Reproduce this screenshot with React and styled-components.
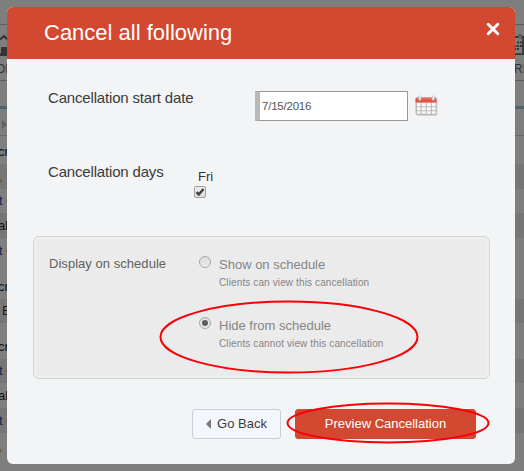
import React from "react";
import styled, { createGlobalStyle } from "styled-components";

const GlobalStyle = createGlobalStyle`
  * { box-sizing: border-box; }
  body { margin: 0; overflow: hidden; background: #7e7e7e; font-family: "Liberation Sans", Arial, sans-serif; }
`;

const Screen = styled.div`
  position: relative;
  width: 524px;
  height: 471px;
  overflow: hidden;
`;

/* Dimmed page under the dialog */
const Page = styled.div`
  display: flex;
  flex-direction: column;
  height: 100%;
  background: #7e7e7e;
`;

const TopStrip = styled.div`
  flex: none;
  height: 24px;
`;

const NavBar = styled.div`
  flex: none;
  display: flex;
  justify-content: space-between;
  height: 57px;
  padding-top: 9px;
  border-top: 1px solid #5c5c5c;
  border-bottom: 1px solid #5c5c5c;
`;

const NavItem = styled.div`
  width: 9px;
  overflow: hidden;
  font-size: 12px;
  line-height: 14px;
  color: #333;
  svg { display: block; margin-bottom: 5px; }
  span { display: block; margin-left: ${(p) => p.$shift || 0}px; }
`;

const SubBar = styled.div`
  flex: none;
  height: 28px;
  border-bottom: 3px solid #4a6670;
`;

const GridHead = styled.div`
  flex: none;
  display: flex;
  align-items: center;
  height: 27px;
  padding: 5px 0 0 2px;
  border-bottom: 1px solid #686868;
`;

const PageRow = styled.div`
  flex: none;
  display: flex;
  align-items: flex-end;
  height: ${(p) => p.$h}px;
  padding-bottom: 6px;
  line-height: 13px;
  font-size: 13px;
  white-space: nowrap;
  color: ${(p) => p.$color || "#101010"};
  background: ${(p) => (p.$dark ? "#767676" : "#7f7f7f")};
  span { margin-left: ${(p) => p.$shift || 0}px; }
`;

const Mark = styled.i`
  width: 3px;
  height: 4px;
  margin: 0 0 4px 3px;
  border-radius: 2px 0 0 2px;
  background: #80583a;
`;

const Dialog = styled.section`
  position: absolute;
  top: 7px;
  left: 7px;
  display: flex;
  flex-direction: column;
  width: 508px;
  height: 457px;
  border-radius: 6px;
  overflow: hidden;
  background: #f2f4f6;
`;

const Header = styled.header`
  flex: none;
  display: flex;
  justify-content: space-between;
  height: 52px;
  padding: 13px 15px 0 37px;
  background: #d34830;
`;

const Title = styled.h1`
  margin: 0;
  font-size: 22px;
  font-weight: 400;
  line-height: 25px;
  color: #fff;
`;

const CloseButton = styled.button`
  width: 14px;
  height: 14px;
  margin-top: 2px;
  padding: 0;
  border: 0;
  background: none;
  svg { display: block; }
`;

const Field = styled.div`
  flex: none;
  display: flex;
  height: ${(p) => p.$h}px;
  padding-left: 41px;
`;

const FieldLabel = styled.div`
  width: ${(p) => p.$w}px;
  padding-top: ${(p) => p.$top}px;
  font-size: 15px;
  letter-spacing: -0.17px;
  line-height: 18px;
  color: #3b3b3b;
`;

const DateInput = styled.input`
  width: 153px;
  height: 30px;
  margin: 32px 7px 0 0;
  padding: 0 2px;
  border: 1px solid #999;
  border-left: 5px solid #b9b9b9;
  border-radius: 0;
  background: #fff;
  font: 11.5px "Liberation Sans", Arial, sans-serif;
  letter-spacing: -0.22px;
  color: #555;
`;

const CalendarIcon = styled.svg`
  display: block;
  margin-top: 35px;
`;

const Day = styled.label`
  display: flex;
  flex-direction: column;
  padding-top: 8px;
  font-size: 13px;
  line-height: 17px;
  color: #333;
`;

const DayName = styled.span`
  padding-left: 4px;
`;

const Checkbox = styled.span`
  display: flex;
  width: 12px;
  height: 12px;
  margin-top: 1px;
  border: 1px solid #a0a0a0;
  border-radius: 2px;
  background: linear-gradient(#ededed, #dedede);
`;

const OptionPanel = styled.div`
  flex: none;
  display: flex;
  width: 457px;
  height: 143px;
  margin-left: 26px;
  padding: 18px 0 0 15px;
  border: 1px solid #cfd1d2;
  border-radius: 6px;
  background: #ebebeb;
  box-shadow: inset 0 0 0 2px #eeefef;
`;

const PanelLabel = styled.div`
  width: 150px;
  font-size: 13px;
  letter-spacing: 0.04px;
  line-height: 18px;
  color: #606060;
`;

const Options = styled.div`
  display: flex;
  flex-direction: column;
`;

const Option = styled.div`
  display: flex;
  height: 61px;
  gap: 8px;
`;

const Radio = styled.span`
  display: flex;
  align-items: center;
  justify-content: center;
  width: 12px;
  height: 12px;
  margin-top: 1px;
  border: 1px solid #a6a6a6;
  border-radius: 50%;
  background: linear-gradient(#dedede, #ebebeb);
  &::after {
    content: "";
    width: 6px;
    height: 6px;
    border-radius: 50%;
    background: ${(p) => (p.$on ? "#5c5c5c" : "transparent")};
  }
`;

const OptionTitle = styled.div`
  padding-top: 1px;
  font-size: 13px;
  line-height: 17px;
  color: #858585;
`;

const OptionHint = styled.div`
  margin-top: 4px;
  font-size: 10px;
  letter-spacing: 0.12px;
  line-height: 12px;
  color: #858585;
`;

const Actions = styled.div`
  display: flex;
  gap: 14px;
  padding: 30px 0 0 185px;
`;

const Button = styled.button`
  display: flex;
  align-items: center;
  justify-content: center;
  gap: 6px;
  width: ${(p) => (p.$primary ? 181 : 89)}px;
  height: 30px;
  padding: 0 0 1px;
  border: 1px solid ${(p) => (p.$primary ? "#d34830" : "#c7d0d6")};
  border-radius: 3px;
  background: ${(p) => (p.$primary ? "#d34830" : "#f3f7fb")};
  color: ${(p) => (p.$primary ? "#fff" : "#3c3c3c")};
  font: 13px "Liberation Sans", Arial, sans-serif;
`;

const Annotations = styled.svg`
  position: absolute;
  inset: 0;
  pointer-events: none;
`;

const rows = [
  { h: 28, text: "cr", shift: -2 },
  { h: 25, text: ",", shift: -1, color: "#70401c", dark: true },
  { h: 24, text: "t", shift: -1, color: "#102448", mark: true },
  { h: 25, text: "al", shift: -2, dark: true },
  { h: 25, text: "t", shift: -1, color: "#102448", mark: true },
  { h: 36, text: "cr", shift: -2 },
  { h: 24, text: "E", shift: 2, color: "#30100c", dark: true },
  { h: 36, text: "cr", shift: -2 },
  { h: 24, text: "t", shift: -1, color: "#102448", mark: true, dark: true },
  { h: 25, text: "al", shift: -2 },
  { h: 25, text: "t", shift: -1, color: "#102448", mark: true, dark: true },
  { h: 26, text: ",", shift: -1, color: "#70401c" },
];

function Calendar() {
  return (
    <CalendarIcon width="23" height="24" viewBox="0 0 23 24">
      <rect x="1.5" y="5" width="21" height="17" rx="2" fill="#d2d3d4" />
      <rect x="0.5" y="3.5" width="21" height="17.5" rx="1.5" fill="#b8b8b8" />
      <path d="M.5 8.2V5q0-1.5 1.5-1.5h18q1.5 0 1.5 1.5v3.2z" fill="#e8503c" />
      <path d="M1 5.2q0-1 1-1h18q1 0 1 1z" fill="#f1796a" />
      <path
        d="M2 9h3.6v3.2H2zM6.7 9h4v3.2h-4zM11.8 9h4v3.2h-4zM16.9 9h3.6v3.2h-3.6zM2 13.2h3.6v3H2zM6.7 13.2h4v3h-4zM11.8 13.2h4v3h-4zM16.9 13.2h3.6v3h-3.6zM2 17.2h3.6v2.6H2zM6.7 17.2h4v2.6h-4zM11.8 17.2h4v2.6h-4zM16.9 17.2h3.6v2.6h-3.6z"
        fill="#fafafa"
      />
      <path d="M4.8 3v2.2M18.3 3v2.2" stroke="#bcbcbc" strokeWidth="3" strokeLinecap="round" />
      <path d="M4.8 2.6v2.2M18.3 2.6v2.2" stroke="#ededed" strokeWidth="1.5" strokeLinecap="round" />
    </CalendarIcon>
  );
}

export default function App() {
  return (
    <Screen>
      <GlobalStyle />
      <Page>
        <TopStrip />
        <NavBar>
          <NavItem $shift={-4}>
            <svg width="9" height="23" viewBox="0 0 9 23">
              <path d="M0 5.5L4 2l5 5" fill="none" stroke="#303030" strokeWidth="2" />
              <path d="M1 13h8v9H0v-3h1z" fill="#353535" />
            </svg>
            <span>ON</span>
          </NavItem>
          <NavItem $shift={-1}>
            <svg width="9" height="23" viewBox="0 0 9 23">
              <path d="M0 3h3M7 3h2M0 20.2h8V3" fill="none" stroke="#383838" strokeWidth="1.8" />
              <circle cx="5.2" cy="2.4" r="1.6" fill="#808080" stroke="#383838" />
              <path d="M2 8.5h5M-1 12h8M-1 15h5" stroke="#383838" strokeWidth="1.8" strokeDasharray="2.2 .8" />
            </svg>
            <span>RE</span>
          </NavItem>
        </NavBar>
        <SubBar />
        <GridHead>
          <svg width="5" height="9" viewBox="0 0 5 9">
            <path d="M0 0l5 4.5L0 9z" fill="#606060" />
          </svg>
        </GridHead>
        {rows.map((row, i) => (
          <PageRow key={i} $h={row.h} $shift={row.shift} $color={row.color} $dark={row.dark}>
            <span>{row.text}</span>
            {row.mark && <Mark />}
          </PageRow>
        ))}
      </Page>

      <Dialog>
        <Header>
          <Title>Cancel all following</Title>
          <CloseButton aria-label="Close">
            <svg width="14" height="14" viewBox="0 0 14 14">
              <path d="M2.2 2.2l9.6 9.6M11.8 2.2l-9.6 9.6" stroke="#fff" strokeWidth="2.9" strokeLinecap="round" />
            </svg>
          </CloseButton>
        </Header>
        <Field $h={101}>
          <FieldLabel $w={207} $top={30}>Cancellation start date</FieldLabel>
          <DateInput defaultValue="7/15/2016" />
          <Calendar />
        </Field>
        <Field $h={76}>
          <FieldLabel $w={146} $top={3}>Cancellation days</FieldLabel>
          <Day>
            <DayName>Fri</DayName>
            <Checkbox>
              <svg width="10" height="10" viewBox="0 0 10 10">
                <path d="M1.6 5.2l2.2 2.3L8.5 2" fill="none" stroke="#404040" strokeWidth="2.5" />
              </svg>
            </Checkbox>
          </Day>
        </Field>
        <OptionPanel>
          <PanelLabel>Display on schedule</PanelLabel>
          <Options>
            <Option>
              <Radio />
              <div>
                <OptionTitle>Show on schedule</OptionTitle>
                <OptionHint>Clients can view this cancellation</OptionHint>
              </div>
            </Option>
            <Option>
              <Radio $on />
              <div>
                <OptionTitle>Hide from schedule</OptionTitle>
                <OptionHint>Clients cannot view this cancellation</OptionHint>
              </div>
            </Option>
          </Options>
        </OptionPanel>
        <Actions>
          <Button>
            <svg width="5" height="10" viewBox="0 0 5 10">
              <path d="M5 0v10L0 5z" fill="#777" />
            </svg>
            Go Back
          </Button>
          <Button $primary>Preview Cancellation</Button>
        </Actions>
      </Dialog>

      <Annotations width="524" height="471" viewBox="0 0 524 471" fill="none" stroke="#fb0007" strokeWidth="2">
        <ellipse cx="289" cy="337" rx="128.5" ry="35.5" />
        <ellipse cx="388" cy="423" rx="100.5" ry="19.5" />
      </Annotations>
    </Screen>
  );
}
